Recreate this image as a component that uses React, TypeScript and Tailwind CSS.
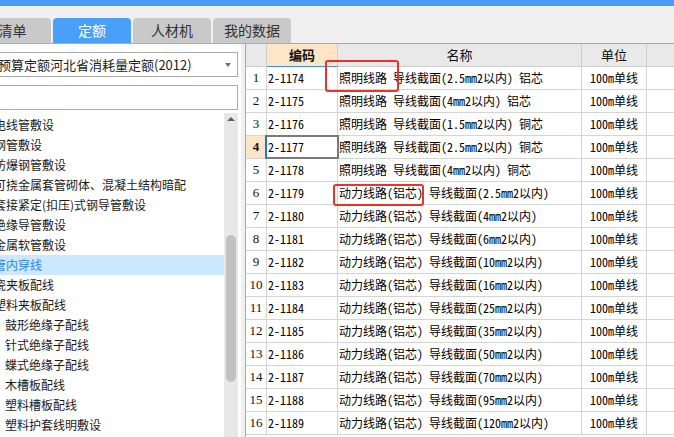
import React from "react";

const tree: { t: string; l: number; sel?: boolean }[] = [
  { t: "电线管敷设", l: 0 },
  { t: "钢管敷设", l: 0 },
  { t: "防爆钢管敷设", l: 0 },
  { t: "可挠金属套管砌体、混凝土结构暗配", l: 0 },
  { t: "套接紧定(扣压)式钢导管敷设", l: 0 },
  { t: "绝缘导管敷设", l: 0 },
  { t: "金属软管敷设", l: 0 },
  { t: "管内穿线", l: 0, sel: true },
  { t: "瓷夹板配线", l: 0 },
  { t: "塑料夹板配线", l: 0 },
  { t: "鼓形绝缘子配线", l: 1 },
  { t: "针式绝缘子配线", l: 1 },
  { t: "蝶式绝缘子配线", l: 1 },
  { t: "木槽板配线", l: 1 },
  { t: "塑料槽板配线", l: 1 },
  { t: "塑料护套线明敷设", l: 1 },
];

const rows: [string, string][] = [
  ["2-1174", "照明线路 导线截面(2.5mm2以内) 铝芯"],
  ["2-1175", "照明线路 导线截面(4mm2以内) 铝芯"],
  ["2-1176", "照明线路 导线截面(1.5mm2以内) 铜芯"],
  ["2-1177", "照明线路 导线截面(2.5mm2以内) 铜芯"],
  ["2-1178", "照明线路 导线截面(4mm2以内) 铜芯"],
  ["2-1179", "动力线路(铝芯) 导线截面(2.5mm2以内)"],
  ["2-1180", "动力线路(铝芯) 导线截面(4mm2以内)"],
  ["2-1181", "动力线路(铝芯) 导线截面(6mm2以内)"],
  ["2-1182", "动力线路(铝芯) 导线截面(10mm2以内)"],
  ["2-1183", "动力线路(铝芯) 导线截面(16mm2以内)"],
  ["2-1184", "动力线路(铝芯) 导线截面(25mm2以内)"],
  ["2-1185", "动力线路(铝芯) 导线截面(35mm2以内)"],
  ["2-1186", "动力线路(铝芯) 导线截面(50mm2以内)"],
  ["2-1187", "动力线路(铝芯) 导线截面(70mm2以内)"],
  ["2-1188", "动力线路(铝芯) 导线截面(95mm2以内)"],
  ["2-1189", "动力线路(铝芯) 导线截面(120mm2以内)"],
];

const cellFont = "font-['Noto_Sans_Mono_CJK_SC','Noto_Sans_CJK_SC',monospace] text-[12px] text-black";

export default function App() {
  return (
    <div className="w-[674px] h-[437px] overflow-hidden bg-[#f0f0f0] flex flex-col font-['Noto_Sans_CJK_SC',sans-serif]">
      <div className="h-[6px] shrink-0 bg-[#4a9cf6]" />
      <div className="h-[37px] shrink-0 flex items-end gap-[2px] overflow-hidden">
        <div className="ml-[-26px] w-[77px] h-[25px] rounded-t-[4px] bg-[#c9c9c9] text-[#333] text-[14px] flex items-center justify-center">清单</div>
        <div className="w-[78px] h-[25px] rounded-t-[4px] bg-[#4aa0f8] text-white text-[14px] flex items-center justify-center">定额</div>
        <div className="w-[78px] h-[25px] rounded-t-[4px] bg-[#c9c9c9] text-[#333] text-[14px] flex items-center justify-center">人材机</div>
        <div className="w-[78px] h-[25px] rounded-t-[4px] bg-[#c9c9c9] text-[#333] text-[14px] flex items-center justify-center">我的数据</div>
      </div>
      <div className="flex-1 min-h-0 flex border-t border-[#acacac]">
        {/* left panel */}
        <div className="w-[241px] shrink-0 bg-white flex flex-col overflow-hidden">
          <div className="mt-[8px] ml-[-2px] w-[240px] h-[25px] border border-[#ababab] bg-white flex items-center relative">
            <span className="ml-[-1px] text-[13px] text-[#222] whitespace-nowrap">预算定额河北省消耗量定额(2012)</span>
            <div className="absolute right-[6px] top-[10px] w-0 h-0 border-l-[3.5px] border-r-[3.5px] border-t-[4px] border-l-transparent border-r-transparent border-t-[#707070]" />
          </div>
          <div className="mt-[8px] ml-[-2px] w-[240px] h-[25px] border border-[#ababab] bg-white" />
          <div className="mt-[3px] flex flex-1 min-h-0">
            <div className="w-[224px] shrink-0 pt-[2px] overflow-hidden">
              {tree.map((it, i) => (
                <div
                  key={i}
                  className={
                    "h-[20px] flex items-center whitespace-nowrap text-[12px] " +
                    (it.sel ? "bg-[#cce8ff] text-[#2f86e0]" : "text-[#1a1a1a]")
                  }
                >
                  <span className={it.l === 0 ? "ml-[-6px]" : "ml-[5px]"}>{it.t}</span>
                </div>
              ))}
            </div>
            <div className="w-[14px] shrink-0 bg-[#e8e8e8] flex flex-col items-center">
              <div className="mt-[4px] w-0 h-0 border-l-[4px] border-r-[4px] border-b-[4px] border-l-transparent border-r-transparent border-b-[#606060]" />
              <div className="mt-[114px] w-[10px] h-[147px] rounded-[5px] bg-[#c1c1c1]" />
            </div>
          </div>
        </div>
        <div className="w-[4px] shrink-0" />
        {/* grid */}
        <div className="flex-1 min-w-0 bg-white border-l border-[#a8a8a8] relative overflow-hidden">
          <div className="grid grid-cols-[21px_71px_244px_65px_1fr]">
            <div className="h-[23px] bg-[#e9e9e9] border-r border-b border-[#cfcfcf]" />
            <div className="h-[23px] bg-[#fde5c7] border-r border-[#cfcfcf] border-b border-b-[#3d8fe6] flex items-center justify-center text-[13px] font-bold text-[#111]">编码</div>
            <div className="h-[23px] bg-[#e9e9e9] border-r border-b border-[#cfcfcf] flex items-center justify-center text-[13px] text-[#111]">名称</div>
            <div className="h-[23px] bg-[#e9e9e9] border-r border-b border-[#cfcfcf] flex items-center justify-center text-[13px] text-[#111]">单位</div>
            <div className="h-[23px] bg-[#e9e9e9] border-b border-[#cfcfcf]" />
            {rows.map(([code, name], i) => {
              const sel = i === 3;
              return (
                <React.Fragment key={code}>
                  <div
                    className={
                      "h-[23px] border-r border-b border-[#d4d4d4] flex items-center justify-center font-['Liberation_Serif',serif] text-[13px] text-[#111] " +
                      (sel ? "bg-[#fde5c7] font-bold" : "bg-white")
                    }
                  >
                    {i + 1}
                  </div>
                  <div className={"h-[23px] border-r border-b border-[#d4d4d4] flex items-center pl-[1px] relative " + cellFont}>
                    {code}
                    {sel && (
                      <div className="absolute left-[-2px] top-[-1px] right-[-2px] bottom-[-1px] border-2 border-[#7a7a7a] border-l-[#1f74e0]" />
                    )}
                  </div>
                  <div className={"h-[23px] border-r border-b border-[#d4d4d4] flex items-center pl-[1px] whitespace-nowrap " + cellFont}>{name}</div>
                  <div className={"h-[23px] border-r border-b border-[#d4d4d4] flex items-center justify-center whitespace-nowrap " + cellFont}>100m单线</div>
                  <div className="h-[23px] border-b border-[#d4d4d4]" />
                </React.Fragment>
              );
            })}
          </div>
          <div className="absolute left-[79px] top-[16px] w-[74px] h-[32px] border-2 border-[#e8322c] rounded-[3px]" />
          <div className="absolute left-[87px] top-[140px] w-[91px] h-[22px] border-2 border-[#e8322c] rounded-[3px]" />
        </div>
      </div>
    </div>
  );
}
